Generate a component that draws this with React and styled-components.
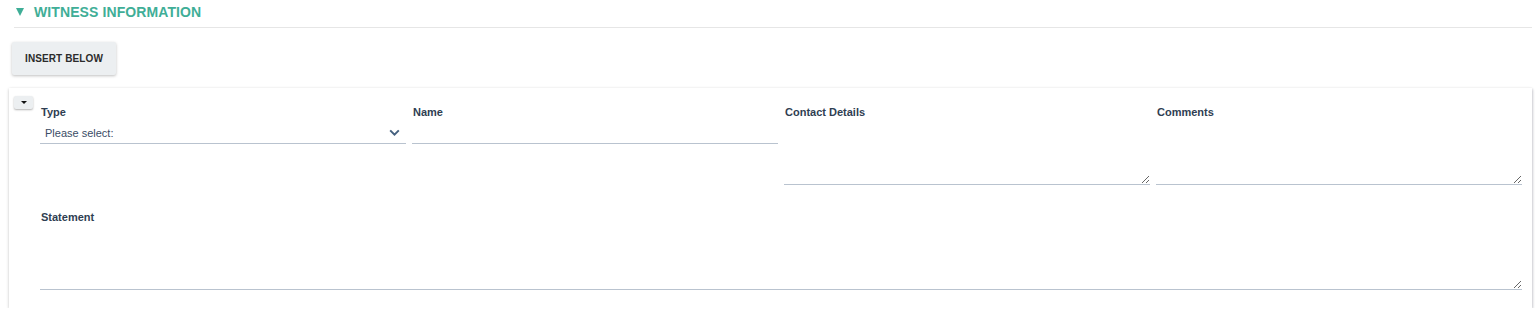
import React, { useState } from 'react';
import styled, { createGlobalStyle } from 'styled-components';

const GlobalStyle = createGlobalStyle`
  body {
    margin: 0;
    background: #ffffff;
    font-family: "Liberation Sans", Arial, sans-serif;
  }
`;

const Page = styled.div`
  padding: 0 6px 0 9px;
`;

const SectionHeader = styled.div`
  display: flex;
  align-items: center;
  height: 27px;
  margin-left: 5px;
  border-bottom: 1px solid #e6e6e6;
  color: #3fae97;
  font-size: 14px;
  font-weight: bold;
  letter-spacing: 0.1px;
  cursor: pointer;
`;

const Caret = styled.span`
  width: 0;
  height: 0;
  margin: 0 10px 3px 2px;
  border-left: 4px solid transparent;
  border-right: 4px solid transparent;
  border-top: 8px solid #3fae97;
`;

const Title = styled.span`
  padding-bottom: 3px;
`;

const Toolbar = styled.div`
  padding: 14px 0 13px 3px;
`;

const InsertButton = styled.button`
  width: 104px;
  height: 33px;
  padding: 0;
  border: none;
  border-radius: 2px;
  background: #eceff1;
  color: #2b2b2b;
  font-family: inherit;
  font-size: 10px;
  font-weight: bold;
  letter-spacing: 0.1px;
  box-shadow: 0 1px 3px rgba(0, 0, 0, 0.25);
  cursor: pointer;
`;

const Card = styled.div`
  display: flex;
  width: 1523px;
  background: #fff;
  box-shadow: 0 1px 3px rgba(0, 0, 0, 0.22), 1px 1px 2px rgba(60, 60, 110, 0.12);
`;

const Handle = styled.div`
  width: 31px;
  padding: 8px 0 0 5px;
  box-sizing: border-box;
`;

const ToggleButton = styled.button`
  display: flex;
  align-items: center;
  justify-content: center;
  width: 19px;
  height: 13px;
  padding: 0;
  border: none;
  border-radius: 2px;
  background: #eceff1;
  box-shadow: 0 1px 2px rgba(0, 0, 0, 0.3);
  cursor: pointer;

  &::after {
    content: '';
    border-left: 3px solid transparent;
    border-right: 3px solid transparent;
    border-top: 3px solid #111;
  }
`;

const Fields = styled.div`
  display: grid;
  grid-template-columns: repeat(4, 366px);
  column-gap: 6px;
  row-gap: 25px;
  padding: 17px 0 18px;
`;

const Field = styled.div`
  display: flex;
  flex-direction: column;
  grid-column: ${(p) => (p.wide ? '1 / -1' : 'auto')};
`;

const Label = styled.label`
  height: 14px;
  margin: 0 0 4px 1px;
  color: #2f3e52;
  font-size: 11px;
  font-weight: bold;
  line-height: 15px;
`;

const SelectWrap = styled.div`
  position: relative;
  height: 21px;
  border-bottom: 1px solid #b9c3cf;
  box-sizing: border-box;
`;

const Select = styled.select`
  appearance: none;
  width: 100%;
  height: 20px;
  padding: 0 24px 0 5px;
  border: none;
  background: transparent;
  color: #3a4c66;
  font-family: inherit;
  font-size: 11px;
  outline: none;
`;

const Chevron = styled.svg`
  position: absolute;
  right: 6px;
  top: 6px;
  pointer-events: none;
`;

const Input = styled.input`
  height: 21px;
  padding: 0 5px;
  border: none;
  border-bottom: 1px solid #b9c3cf;
  box-sizing: border-box;
  font-family: inherit;
  font-size: 11px;
  outline: none;
`;

const TextArea = styled.textarea`
  display: block;
  height: 62px;
  padding: 4px 5px;
  border: none;
  border-bottom: 1px solid #b9c3cf;
  box-sizing: border-box;
  resize: vertical;
  font-family: inherit;
  font-size: 11px;
  outline: none;
`;

const App = () => {
  const [type, setType] = useState('');

  return (
    <Page>
      <GlobalStyle />
      <SectionHeader>
        <Caret />
        <Title>WITNESS INFORMATION</Title>
      </SectionHeader>
      <Toolbar>
        <InsertButton type="button">INSERT BELOW</InsertButton>
      </Toolbar>
      <Card>
        <Handle>
          <ToggleButton type="button" aria-label="Row options" />
        </Handle>
        <Fields>
          <Field>
            <Label>Type</Label>
            <SelectWrap>
              <Select value={type} onChange={(e) => setType(e.target.value)}>
                <option value="">Please select:</option>
                <option value="eye">Eye witness</option>
                <option value="other">Other</option>
              </Select>
              <Chevron width="11" height="8" viewBox="0 0 11 8">
                <path d="M1.2 1.4 L5.5 5.6 L9.8 1.4" fill="none" stroke="#45617f" strokeWidth="2" />
              </Chevron>
            </SelectWrap>
          </Field>
          <Field>
            <Label>Name</Label>
            <Input type="text" />
          </Field>
          <Field>
            <Label>Contact Details</Label>
            <TextArea />
          </Field>
          <Field>
            <Label>Comments</Label>
            <TextArea />
          </Field>
          <Field wide>
            <Label>Statement</Label>
            <TextArea />
          </Field>
        </Fields>
      </Card>
    </Page>
  );
};

export default App;
